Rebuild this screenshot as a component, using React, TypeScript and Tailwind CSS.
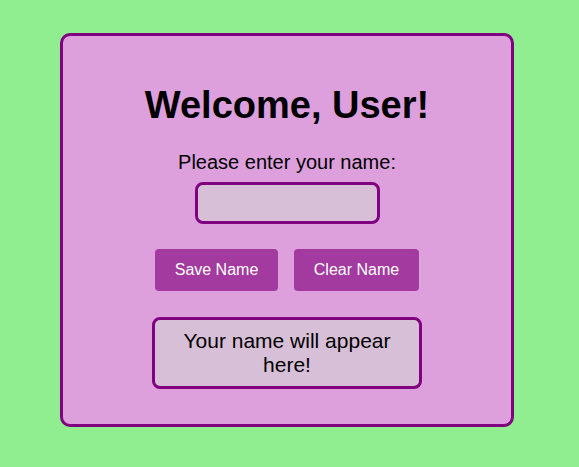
import React, { useState } from 'react';

export default function App() {
  const [name, setName] = useState('');
  const [saved, setSaved] = useState('');

  return (
    <div className="min-h-screen w-full bg-[#90ee90] pt-[33px] font-['Liberation_Sans',Arial,sans-serif]">
      <div className="ml-[60px] flex h-[394px] w-[454px] flex-col items-center rounded-[10px] border-[3px] border-[#800080] bg-[#dda0dd] pt-[47px] text-black">
        <h1 className="text-[38px] font-bold leading-[44px]">Welcome, {saved || 'User'}!</h1>
        <label htmlFor="name" className="mt-[24px] text-[20px] leading-[23px]">
          Please enter your name:
        </label>
        <input
          id="name"
          value={name}
          onChange={(e) => setName(e.target.value)}
          className="mt-[8px] h-[42px] w-[185px] rounded-[8px] border-[3px] border-[#800080] bg-[#d8bfd8] px-2 text-[16px] outline-none"
        />
        <div className="mt-[25px] flex gap-[16px]">
          <button
            onClick={() => setSaved(name)}
            className="h-[42px] w-[123px] rounded-[4px] bg-[#a23aa0] text-[16px] leading-[18px] text-white"
          >
            Save Name
          </button>
          <button
            onClick={() => {
              setName('');
              setSaved('');
            }}
            className="h-[42px] w-[125px] rounded-[4px] bg-[#a23aa0] text-[16px] leading-[18px] text-white"
          >
            Clear Name
          </button>
        </div>
        <div className="mt-[26px] box-border w-[270px] rounded-[8px] border-[3px] border-[#800080] bg-[#d8bfd8] px-[10px] py-[9px] text-center text-[21px] leading-[24px]">
          {saved ? `Hello, ${saved}!` : 'Your name will appear here!'}
        </div>
      </div>
    </div>
  );
}
